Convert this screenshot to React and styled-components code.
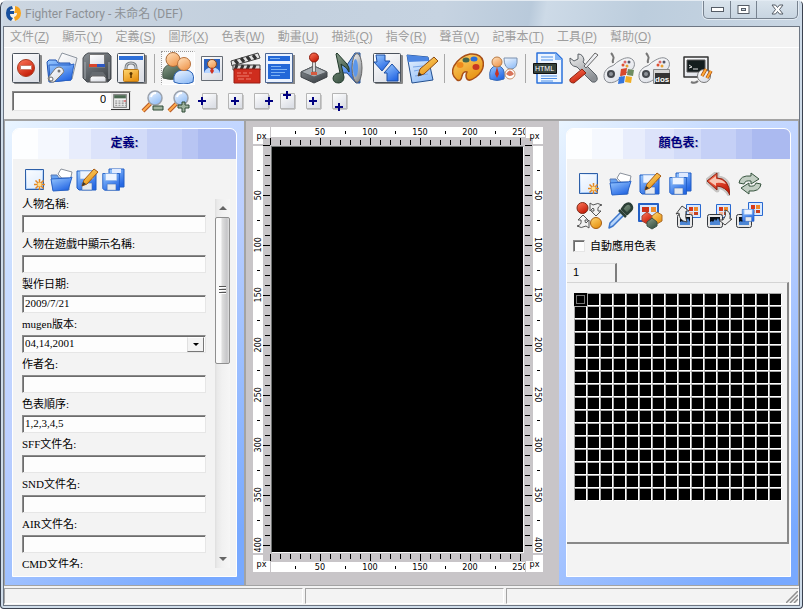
import React, { useState } from 'react';
import styled, { createGlobalStyle, css } from 'styled-components';

const SANS = '"Liberation Sans", "Noto Sans CJK TC", sans-serif';
const SERIF = '"Liberation Serif", "Noto Sans CJK TC", serif';
const FACE = '#f3f3f3';
const GREY = '#9e9e9e';

const Global = createGlobalStyle`
  * { box-sizing: border-box; }
  html, body { margin: 0; height: 100%; }
  body { background: #fff; font-family: ${SANS}; font-size: 12px; color: #000; overflow: hidden; }
  button { margin: 0; padding: 0; border: 0; background: none; font: inherit; color: inherit; }
  input, select { margin: 0; border-radius: 0; font: inherit; color: inherit; outline: none; }
  svg { flex: none; }
`;

/* ---------- window frame ---------- */

const Window = styled.div`
  display: flex;
  flex-direction: column;
  height: 100vh;
  padding: 0 2px 2px;
  border: 1px solid #3b4250;
  border-top-color: #e4ebf2;
  border-radius: 7px 5px 4px 4px;
  background: #cfdce9;
`;

const TitleBar = styled.header`
  display: flex;
  flex: none;
  height: 25px;
  padding: 0 0 0 2px;
  align-items: flex-start;
  background: linear-gradient(100deg, #ccd6e1 0%, #c3d0de 30%, #c6d3e1 55%, #b9cadb 66%, #cddae7 68%, #bccddd 80%, #c9d6e3 100%);
`;

const Title = styled.h1`
  display: flex;
  flex: 1;
  align-items: center;
  gap: 3px;
  height: 25px;
  margin: 0;
  font: 400 12px/24px Roboto, "Noto Sans CJK TC", sans-serif;
  color: #8d9196;
`;

const Caption = styled.div`
  display: flex;
  height: 18px;
  margin-right: 2px;
  border: 1px solid #77828f;
  border-top: 0;
  border-radius: 0 0 5px 5px;
  background: linear-gradient(#d9e3ec, #c8d5e1);
  box-shadow: 0 0 0 1px #e3ebf3;
`;

const CaptionButton = styled.button`
  display: flex;
  align-items: center;
  justify-content: center;
  width: ${(p) => (p.$wide ? 41 : 26)}px;
  & + & { border-left: 1px solid #77828f; }
`;

const Client = styled.div`
  display: flex;
  flex: 1;
  flex-direction: column;
  min-height: 0;
  border: 1px solid #6d7683;
  background: ${FACE};
`;

/* ---------- menu and toolbars ---------- */

const MenuBar = styled.nav`
  display: flex;
  flex: none;
  height: 21px;
  border-bottom: 1px solid #fff;
`;

const MenuItem = styled.button`
  padding: 0 7px 0 6px;
  line-height: 20px;
  white-space: nowrap;
  color: ${GREY};
`;

const ToolArea = styled.div`
  display: flex;
  flex: none;
  flex-direction: column;
  height: 73px;
  padding: 3px 6px 0;
  gap: 4px;
  border-bottom: 2px solid #a3a3a3;
`;

const ToolRow = styled.div`
  display: flex;
  align-items: center;
  height: ${(p) => (p.$small ? 24 : 34)}px;
`;

const ToolGroup = styled.div`
  display: flex;
  gap: ${(p) => p.$gap || 0}px;
  margin-left: ${(p) => p.$offset || 0}px;
`;

const Divider = styled.span`
  width: 1px;
  height: 29px;
  margin: 0 6px 0 5px;
  background: #a8a8a8;
`;

const ToolButton = styled.button`
  display: flex;
  align-items: center;
  justify-content: center;
  width: 34px;
  height: 34px;
  ${(p) => p.$pressed && css`
    background: #fafafa;
    border: 1px solid #fff;
    border-top: 1px dotted #9a9a9a;
    border-left: 1px dotted #9a9a9a;
  `}
`;

const SmallButton = styled.button`
  display: flex;
  align-items: center;
  justify-content: center;
  width: 26px;
  height: 24px;
`;

const sunken = css`
  border: 1px solid;
  border-color: #8a8a8a #e6e6e6 #e6e6e6 #8a8a8a;
  box-shadow: inset 1px 1px 0 #6c6c6c;
  background: #fdfdfd;
`;

const NumberBox = styled.div`
  ${sunken}
  display: flex;
  width: 119px;
  height: 20px;
  margin: 0 9px 0 2px;
  padding: 1px 0 0 1px;
`;

const NumberInput = styled.input`
  flex: 1;
  min-width: 0;
  padding: 0 5px 5px 0;
  border: 0;
  background: transparent;
  text-align: right;
  font-size: 11px;
`;

const CalcButton = styled.button`
  display: flex;
  align-items: center;
  justify-content: center;
  width: 19px;
  border-right: 1px solid #333;
  border-bottom: 1px solid #333;
  background: #ececec;
`;

/* ---------- body ---------- */

const Body = styled.main`
  display: flex;
  flex: 1;
  min-height: 0;
`;

const SidePanel = styled.aside`
  display: flex;
  flex: 0 0 242px;
  padding: 7px 7px 8px;
  border: solid #a3a3a3;
  border-width: 0 ${(p) => (p.$right ? 1 : 2)}px 0 ${(p) => (p.$right ? 0 : 1)}px;
  background: linear-gradient(135deg, #eaf5ff 0%, #c9ddff 22%, #bccfff 46%, #a0c1ff 65%, #78a9ff 92%);
  ${(p) => p.$right && css`flex-basis: 240px;`}
`;

const Card = styled.section`
  display: flex;
  flex: 1;
  flex-direction: column;
  min-width: 0;
  border: 1px solid #fff;
  border-radius: 7px 7px 0 0;
  background: ${FACE};
  overflow: hidden;
`;

const CardTitle = styled.h2`
  flex: none;
  height: 30px;
  margin: 0;
  font: 700 12px/28px ${SANS};
  text-align: center;
  color: #000080;
  text-shadow: 1px 1px 0 #bcc0cf;
  background: linear-gradient(90deg, #fdfeff 0 11%, #f5f8fe 11% 25%, #e8edfc 25% 35%, #dce3fa 35% 48%, #d2dbf8 48% 60%, #c5d0f6 60% 76%, #b8c5f3 76% 83%, #abbaf0 83%);
`;

const FileTools = styled.div`
  display: flex;
  flex: none;
  gap: 2px;
  padding: 9px 0 0 11px;
  height: 38px;
`;

const IconButton = styled.button`
  display: flex;
  align-items: center;
  justify-content: center;
  width: 24px;
  height: 24px;
`;

const FormArea = styled.div`
  display: flex;
  flex: 1;
  min-height: 0;
  margin: 0 6px 8px 9px;
`;

const FieldList = styled.div`
  display: flex;
  flex: 1;
  flex-direction: column;
  gap: 4px;
  min-width: 0;
  margin-right: 9px;
  overflow: hidden;
  font: 11px/15px ${SERIF};
`;

const Field = styled.div`
  display: flex;
  flex: none;
  flex-direction: column;
  gap: 3px;
`;

const TextInput = styled.input`
  ${sunken}
  width: 100%;
  height: 18px;
  padding: 0 2px 2px;
`;

const SelectBox = styled.div`
  display: grid;
  grid-template-columns: 1fr 17px;
  height: 18px;
  ${sunken}
  padding: 1px;
  & > * { grid-row: 1; }
`;

const Select = styled.select`
  grid-column: 1 / 3;
  min-width: 0;
  padding: 0 0 2px 1px;
  border: 0;
  appearance: none;
  background: transparent;
  line-height: 13px;
`;

const SelectArrow = styled.span`
  grid-column: 2;
  display: flex;
  align-items: center;
  justify-content: center;
  pointer-events: none;
  border: 1px solid;
  border-color: #fff #777 #777 #e0e0e0;
  background: ${FACE};
`;

const Triangle = styled.span`
  border: solid transparent;
  border-width: 0 ${(p) => p.$size}px;
  ${(p) => (p.$up
    ? css`border-bottom: ${p.$size}px solid ${p.$color};`
    : css`border-top: ${p.$size}px solid ${p.$color};`)}
`;

const ScrollBar = styled.div`
  display: flex;
  flex: none;
  flex-direction: column;
  width: 15px;
  margin-top: 2px;
  background: linear-gradient(90deg, #dedede 0, #e9e9e9 2px, #f1f1f1 7px, #f6f6f6 100%);
`;

const ScrollArrow = styled.button`
  display: flex;
  flex: none;
  align-items: center;
  justify-content: center;
  height: 18px;
`;

const ScrollTrack = styled.div`
  flex: 1;
`;

const ScrollThumb = styled.div`
  display: flex;
  flex-direction: column;
  align-items: center;
  justify-content: center;
  gap: 1px;
  height: 44%;
  border: 1px solid #8f8f8f;
  border-radius: 2px;
  background: linear-gradient(90deg, #fafafa 0 35%, #dcdcdc 50%, #c6c6c8 85%, #e2e2e2);
`;

const Grip = styled.i`
  width: 7px;
  height: 2px;
  border-top: 1px solid #555;
  border-bottom: 1px solid #fff;
`;

/* ---------- ruled workspace ---------- */

const Workspace = styled.section`
  display: grid;
  flex: 1;
  min-width: 0;
  grid-template-columns: 17px minmax(0, 1fr) 18px;
  grid-template-rows: 18px minmax(0, 1fr) 18px;
  padding: 6px 16px 13px 7px;
  background: #c8c5c8;
  font: 9px/10px "DejaVu Sans Condensed", "DejaVu Sans", sans-serif;
`;

const Unit = styled.div`
  display: flex;
  width: 17px;
  height: 17px;
  justify-self: ${(p) => (p.$right ? 'end' : 'start')};
  align-self: ${(p) => (p.$bottom ? 'end' : 'start')};
  align-items: center;
  justify-content: center;
  background: linear-gradient(#c8c5c8, #c8c5c8)
    ${(p) => (p.$right ? 'left' : 'right')} ${(p) => (p.$bottom ? 'top' : 'bottom')} / 7px 6px no-repeat #fff;
`;

const across = css`
  flex-direction: ${(p) => (p.$side === 'top' ? 'column' : 'column-reverse')};
  background:
    repeating-linear-gradient(90deg, #000 0 1px, transparent 1px 10px) 0 ${(p) => (p.$side === 'top' ? '100%' : '0')} / 100% 5px no-repeat,
    repeating-linear-gradient(90deg, #000 0 1px, transparent 1px 50px) 0 ${(p) => (p.$side === 'top' ? '100%' : '0')} / 100% 7px no-repeat;
`;

const down = css`
  flex-direction: ${(p) => (p.$side === 'left' ? 'row' : 'row-reverse')};
  background:
    repeating-linear-gradient(#000 0 1px, transparent 1px 10px) ${(p) => (p.$side === 'left' ? '100%' : '0')} 0 / 5px 100% no-repeat,
    repeating-linear-gradient(#000 0 1px, transparent 1px 50px) ${(p) => (p.$side === 'left' ? '100%' : '0')} 0 / 7px 100% no-repeat;
`;

const RulerBox = styled.div`
  display: flex;
  min-width: 0;
  min-height: 0;
  ${(p) => (p.$side === 'top' || p.$side === 'bottom' ? across : down)}
`;

const Scale = styled.div`
  display: flex;
  overflow: hidden;
  background: #fff;
  ${(p) => (p.$vertical
    ? css`flex-direction: column; width: 10px; margin: 1px 0; padding-top: 24px;`
    : css`height: 10px; margin: 0 0 0 1px; padding-left: 24px;`)}
`;

const Step = styled.div`
  display: flex;
  flex: 0 0 50px;
  align-items: center;
  justify-content: center;
  ${(p) => (p.$vertical
    ? css`background: linear-gradient(#000, #000) 50% 0 / 3px 1px no-repeat;`
    : css`background: linear-gradient(#000, #000) 0 60% / 1px 3px no-repeat;`)}
`;

const StepText = styled.span`
  ${(p) => p.$vertical && css`writing-mode: vertical-rl;`}
  ${(p) => p.$flip && css`transform: rotate(180deg);`}
`;

const Canvas = styled.div`
  margin: 1px;
  border: 1px solid;
  border-color: #6f7372 #f4f4f4 #f4f4f4 #6f7372;
  background: #000;
`;

/* ---------- palette panel ---------- */

const PaletteTools = styled.div`
  display: grid;
  flex: none;
  grid-template-columns: ${(p) => p.$columns};
  align-items: center;
  justify-items: center;
  height: 32px;
  padding-left: 8px;
`;

const ToolBlock = styled.div`
  flex: none;
  padding-top: 9px;
`;

const CheckLine = styled.label`
  display: flex;
  flex: none;
  align-items: center;
  gap: 5px;
  height: 22px;
  margin: 3px 0 6px 6px;
  font: 11px/20px ${SANS};
`;

const Check = styled.input`
  appearance: none;
  width: 12px;
  height: 12px;
  ${sunken}
  &:checked { background: #000080; }
`;

const Tab = styled.button`
  flex: none;
  width: 50px;
  height: 19px;
  padding: 0 0 3px 6px;
  border: solid;
  border-width: 1px 2px 0 0;
  border-color: #dcdcdc #7d7d7d;
  text-align: left;
  font-size: 11px;
`;

const TabPage = styled.div`
  flex: none;
  margin-right: 1px;
  padding: 10px 0 41px 7px;
  border: 2px solid #888;
  border-width: 1px 2px 2px 0;
  border-top-color: #d4d4d4;
`;

const Swatches = styled.div`
  display: grid;
  grid-template-columns: repeat(16, 13px);
`;

const Swatch = styled.button`
  display: flex;
  align-items: center;
  justify-content: center;
  width: 13px;
  height: 13px;
  border: 1px solid;
  border-color: #a9a9a9 #fff #fff #a9a9a9;
  background: #000;
  ${(p) => p.$active && css`
    border-color: #000;
    &::after { content: ''; width: 7px; height: 7px; border: 1px solid #777; }
  `}
`;

/* ---------- status bar ---------- */

const StatusBar = styled.footer`
  display: grid;
  flex: none;
  grid-template-columns: minmax(0, 299fr) minmax(0, 198fr) minmax(0, 293fr);
  gap: 2px;
  height: 20px;
  padding: 2px 0 1px;
  border-top: 1px solid #a3a3a3;
`;

const StatusCell = styled.div`
  display: flex;
  align-items: flex-end;
  justify-content: flex-end;
  border: 1px solid;
  border-color: #a3a3a3 #fff #fff #a3a3a3;
`;

/* ---------- drawings ---------- */

const Hidden = styled.svg`
  position: absolute;
  width: 0;
  height: 0;
`;

const grads = [
  ['gBlue', '#9ccbff', '#2668e4'], ['gSky', '#f0f7ff', '#94bff7'], ['gPaper', '#ffffff', '#dcdfe6'],
  ['gGold', '#ffd873', '#e79212'], ['gRed', '#ff7a5c', '#c41c08'], ['gGrey', '#f4f4f4', '#8b8f94'],
  ['gSkin', '#ffe3c0', '#f09a52'], ['gGreen', '#8ba08c', '#3b5344'], ['gSteel', '#8a9095', '#42474c'],
];

const Defs = () => (
  <Hidden aria-hidden="true">
    <defs>
      {grads.map(([id, a, b]) => (
        <linearGradient key={id} id={id} x1="0" y1="0" x2="0.6" y2="1">
          <stop offset="0" stopColor={a} /><stop offset="1" stopColor={b} />
        </linearGradient>
      ))}
    </defs>
  </Hidden>
);

const Svg = ({ size = 32, box = 32, children }) => (
  <svg width={size} height={size} viewBox={`0 0 ${box} ${box}`} strokeLinejoin="round" aria-hidden="true">{children}</svg>
);

const Sheet = () => (
  <>
    <rect x="3" y="3" width="28" height="29" rx="1" fill="#888" />
    <rect x="1.5" y="1.5" width="27" height="29" rx="1" fill="url(#gPaper)" stroke="#4a525c" />
  </>
);

const Pad = () => (
  <>
    <path d="M10 11c-1-5 2-4 0-7q-1-2-2-3" fill="none" stroke="#777" strokeWidth="2" />
    <path d="M2 28c-3-6 1-12 7-14 3-1 3-3 7-5 5-3 10-5 14-1 3 4 1 9-3 11-4 2-6 2-8 4-2 6-13 11-17 5z" fill="url(#gPaper)" stroke="#888c92" />
    <circle cx="8" cy="22" r="4" fill="#44484e" /><circle cx="8" cy="22" r="2" fill="#8d9299" />
    <circle cx="22" cy="10" r="1.5" fill="#d66" /><circle cx="26" cy="10" r="1.5" fill="#556" />
    <circle cx="24" cy="14" r="1.5" fill="#e8a030" /><circle cx="20" cy="13" r="1.5" fill="#e05030" />
  </>
);

const Monitor = ({ x, y }) => (
  <g transform={`translate(${x} ${y})`}>
    <rect x=".5" y=".5" width="15" height="13" rx="2" fill="#e6e6e6" stroke="#33373c" />
    <path d="M3 3h10v8H3z" fill="#0a0f16" /><path d="M3 11V8l2-1 1 1 2-3 1 2 2-3 2 4v3z" fill="#4d86d4" />
  </g>
);

const Tiles = ({ x, y }) => (
  <g transform={`translate(${x} ${y})`}>
    <rect x=".5" y=".5" width="14" height="13" fill="#d8e9ff" stroke="#2868d0" />
    <path d="M3 3h4v4H3z" fill="#d83818" /><path d="M8 3h4v4H8z" fill="#f08828" />
    <path d="M3 8h4v3H3z" fill="#f2b090" /><path d="M8 8h4v3H8z" fill="#c84020" />
  </g>
);

const icons = {
  stop: <><Sheet /><circle cx="15" cy="16" r="8.500" fill="url(#gRed)" stroke="#a93a20" /><rect x="9.500" y="13.500" width="11" height="4" fill="#fff" stroke="#c97a66" /></>,
  folderPen: (
    <>
      <path d="M12 9l4-8 15 5-5 21z" fill="url(#gPaper)" stroke="#8c949f" />
      <path d="M1 10l2-2h7l2 3h12l1 17-22 2z" fill="url(#gBlue)" stroke="#1c4fae" />
      <path d="M3 13h21l4-1-3 16-21 2z" fill="url(#gBlue)" stroke="#2a62c4" />
      <path d="M2 26l7-9q4-4 8 0 2 3-1 5l-8 8q-5 1-6-4z" fill="url(#gPaper)" stroke="#777" /><circle cx="5" cy="27" r="2" fill="#fff" stroke="#666" />
      <circle cx="13" cy="19" r="1.500" fill="#777" />
    </>
  ),
  drive: (
    <>
      <path d="M4 3l3-2h20l3 3v23l-3 3H6l-4-4V6z" fill="url(#gSteel)" stroke="#4a4f54" />
      <rect x="8.500" y="2.500" width="15" height="13" fill="url(#gPaper)" stroke="#777" /><path d="M8 12h8v3H8z" fill="#d8452c" /><path d="M16 12h8v3h-8z" fill="#2d57c0" />
      <path d="M9 24l2-4h11l3 4v6H9z" fill="#666b70" /><path d="M9 26l2-2h12l2 2v4H9z" fill="url(#gPaper)" stroke="#666" />
      <path d="M4 10v17M28 10v17" stroke="#a6abb0" />
    </>
  ),
  lock: (
    <>
      <Sheet /><path d="M3 4h24v4H3z" fill="#2e6fd8" />
      <path d="M10 19v-3q0-5 5-5t5 5v3" fill="none" stroke="#7a8086" strokeWidth="3" /><path d="M10 19v-3q0-5 5-5t5 5v3" fill="none" stroke="#d5d8dc" />
      <rect x="7.500" y="17.500" width="15" height="12" rx="1" fill="url(#gGold)" stroke="#b8791a" /><path d="M15 21v5" stroke="#5a3500" strokeWidth="1.500" /><circle cx="15" cy="21.500" r="1.500" fill="#5a3500" />
    </>
  ),
  users: (
    <>
      <path d="M1 26q-2-13 9-14 6 0 8 6v8q-9 3-17 0z" fill="url(#gGreen)" stroke="#4c5c50" />
      <circle cx="11" cy="7.500" r="7" fill="url(#gSkin)" stroke="#a86a3a" />
      <path d="M12 30q-2-12 10-12t9 12q-9 4-19 0z" fill="url(#gSky)" stroke="#2c63b6" /><circle cx="22" cy="12" r="6.500" fill="url(#gSkin)" stroke="#b8713c" />
    </>
  ),
  portrait: (
    <>
      <rect x="5.500" y="4.500" width="21" height="24" fill="url(#gPaper)" stroke="#666c75" /><path d="M8 7h16v14H8z" fill="#2b62bf" /><path d="M8 21q1-5 8-6 7 1 8 6z" fill="#b9d6ff" />
      <circle cx="16" cy="12" r="4.500" fill="url(#gSkin)" stroke="#874b24" /><path d="M16 15l2 4-2 3-2-3z" fill="#cf3222" />
    </>
  ),
  clapper: (
    <>
      <path d="M1 9L28 1l2 5L2 14z" fill="#e4e4e4" stroke="#444" /><path d="M5 8l3 4M11 6l3 4M17 4.500l3 4M23 3l3 4" stroke="#333" strokeWidth="3" />
      <path d="M3 13h27v5H3z" fill="#ddd" stroke="#444" /><path d="M7 13l-2 5M13 13l-2 5M19 13l-2 5M25 13l-2 5" stroke="#333" strokeWidth="3" />
      <path d="M4 17h26v14H4z" fill="#cf2d1e" stroke="#9a1d12" /><path d="M7 21h4m2 0h4m2 0h3M7 24h12M8 27h6m2 0h5" stroke="#ee8070" />
    </>
  ),
  text: (
    <>
      <rect x="3" y="3" width="28" height="29" fill="#888" /><rect x="1.500" y="1.500" width="27" height="29" fill="#eaf2ff" stroke="#4b6592" />
      <path d="M4 4h22v5H4zM4 12h22v15H4z" fill="#2368d8" /><path d="M6 6.500h10M7 14.500h10M7 17.500h16M7 20.500h14M7 23.500h9" stroke="#7db2f4" />
    </>
  ),
  joystick: (
    <>
      <path d="M3 20l13-6 13 6v5l-13 6-13-6z" fill="url(#gSteel)" stroke="#3c4044" /><path d="M3 20l13 5 13-5-13-6z" fill="#a5abb0" stroke="#5a5f64" />
      <path d="M14.500 8h3v12h-3z" fill="#ddd" stroke="#555" strokeWidth=".8" /><circle cx="16" cy="5.500" r="4.500" fill="url(#gRed)" stroke="#8d1a0c" /><path d="M13 20h6v3h-6z" fill="#d55a40" />
    </>
  ),
  sound: (
    <>
      <path d="M9 13h6l8-12h5v30h-4l-9-10H9z" fill="url(#gBlue)" stroke="#28508c" /><ellipse cx="25" cy="16" rx="5" ry="14.500" fill="url(#gGrey)" stroke="#666" /><ellipse cx="23.500" cy="16" rx="2.500" ry="9" fill="#5c97ea" />
      <path d="M5 1l10 11q3 4 2 8-1-4-8-8l3 13q0 5-5 6-6 0-6-5 1-5 7-5L4 2z" fill="url(#gGreen)" stroke="#20382a" />
    </>
  ),
  arrows: (
    <>
      <Sheet /><path d="M4 3h9v6h5l-8 10-8-9h3z" fill="url(#gBlue)" stroke="#1d4fa4" /><path d="M20 12l8 9h-2v8H15v-8h-3z" fill="url(#gBlue)" stroke="#1d4fa4" />
    </>
  ),
  note: (
    <>
      <path d="M1 3l21 2 5 23-21 3z" fill="url(#gSky)" stroke="#24508f" /><path d="M1 3l21 2 1 4-21 1z" fill="#4c86e2" /><path d="M7 15l10-1M8 19l5-1M9 24l13-2" stroke="#79a6e8" />
      <path d="M12 24l2-7L28 5l4 4-14 13z" fill="url(#gGold)" stroke="#8a4a14" /><path d="M12 24l1-4 3 3z" fill="#333" />
    </>
  ),
  palette: (
    <>
      <path d="M5 28Q-2 22 2 14 8 4 18 2q11-1 13 7 2 9-7 16-7 5-9 2t0-7q-4-1-5 4-1 6-5 4z" fill="url(#gGold)" stroke="#a84f18" strokeWidth="1.500" />
      <ellipse cx="8" cy="13" rx="3.500" ry="3" fill="#f08a1c" /><ellipse cx="14" cy="8" rx="3.500" ry="2.500" fill="#44664c" /><ellipse cx="22" cy="7" rx="3.500" ry="2.500" fill="#2c6fd8" /><ellipse cx="24" cy="15" rx="3.500" ry="3" fill="#c93822" />
    </>
  ),
  pair: (
    <>
      <path d="M3 27q-2-13 7-13t7 13q-7 3-14 0z" fill="url(#gBlue)" stroke="#3b6cb6" /><circle cx="10" cy="10" r="5" fill="url(#gSkin)" stroke="#b87a44" /><path d="M10 15l2 7-2 4-2-4z" fill="#c73122" />
      <path d="M17 6h13q1 11-6 11t-7-11z" fill="url(#gSky)" stroke="#7a90ae" /><circle cx="23" cy="22" r="5" fill="#fff" stroke="#c8926c" /><path d="M19 22q4-7 8 0-4 4-8 0z" fill="#d8745a" />
    </>
  ),
  html: (
    <>
      <path d="M4 1h19l6 6v24H4z" fill="#edf5ff" stroke="#2b72dc" strokeWidth="1.500" /><path d="M22 1v7h7z" fill="#83b5f5" /><path d="M8 5h12M8 8h12M8 24h16M8 26.500h16M8 29h12" stroke="#4f91e8" />
      <rect x=".5" y="11.500" width="23" height="10" fill="#36433d" stroke="#111" /><text x="2" y="19" fill="#fff" fontFamily="Liberation Sans" fontSize="7">HTML</text>
    </>
  ),
  tools: (
    <>
      <path d="M2 6l4 3 4-2V2q5 0 6 6l-1 2 13 13q3 5-1 7-3 1-5-2L9 15Q1 14 2 6z" fill="url(#gGrey)" stroke="#5b6167" />
      <path d="M30 3L18 16l-2-2L27 1z" fill="url(#gPaper)" stroke="#666" /><path d="M14 17l4 4L6 31q-5 0-4-4z" fill="url(#gRed)" stroke="#8d2412" />
    </>
  ),
  padWin: (
    <><Pad /><path d="M18 17l6-1-1 7-6 1z" fill="#d9492c" /><path d="M25 17l6 1-1 6-6-1z" fill="#6f8d62" /><path d="M16 25l6-1-1 7-6 1z" fill="#3476df" /><path d="M23 24l6 1-1 6-6-1z" fill="#f0ae24" /></>
  ),
  padDos: (
    <><Pad /><rect x="15.500" y="17.500" width="16" height="14" fill="#d5d5d5" stroke="#888" /><path d="M17 21h15v11H17z" fill="#333" /><text x="17" y="30" fill="#fff" fontFamily="Liberation Sans" fontSize="8" fontWeight="700">dos</text></>
  ),
  terminal: (
    <>
      <path d="M3 5h24v20H3z" fill="url(#gPaper)" stroke="#333" strokeWidth="1.500" /><path d="M6 8h18v12H6z" fill="#141d1e" stroke="#555" /><path d="M8 13l3 2-3 1M12 17h5" fill="none" stroke="#ddd" />
      <circle cx="23" cy="24" r="6.500" fill="url(#gPaper)" stroke="#777" /><path d="M21 24l4-7M26 26l4-7" stroke="#a34b10" strokeWidth="3.500" /><path d="M21 24l4-7M26 26l4-7" stroke="#ffa938" strokeWidth="2" /><path d="M17 29q-3 3-7 1" fill="none" stroke="#777" strokeWidth="2" />
    </>
  ),
};

const Magnifier = ({ plus }) => (
  <Svg size={24} box={24}>
    <path d="M2 22l8-8" stroke="#b85a26" strokeWidth="4" /><path d="M2 22l8-8" stroke="#ffab4c" strokeWidth="2" />
    <circle cx="14" cy="9" r="7" fill="url(#gSky)" stroke="#9aa1ac" strokeWidth="1.500" /><path d="M10 8q1-4 5-4" stroke="#fff" strokeWidth="2" fill="none" />
    <path d={plus ? 'M15 13h3v3h4v3h-4v4h-3v-4h-4v-3h4z' : 'M12 17h10v4H12z'} fill="#9fb29e" stroke="#2e4a36" />
  </Svg>
);

const Marker = ({ x, y }) => (
  <Svg size={24} box={24}>
    <path d="M6 20h14V6" fill="none" stroke="#a0a0a0" /><rect x="5.500" y="4.500" width="14" height="15" fill="url(#gPaper)" stroke="#b5b5b5" />
    <path d={`M${x - 4} ${y - 1}h8v2h-8zM${x - 1} ${y - 4}h2v8h-2z`} fill="#000080" />
  </Svg>
);

const FloppyBody = () => (
  <>
    <path d="M2 4h19v19H4l-2-2z" fill="url(#gBlue)" stroke="#1f5cc4" /><path d="M5 4h13v8H5z" fill="#edf4ff" stroke="#7ea9e4" strokeWidth=".6" /><path d="M7 16h10v7H7z" fill="#e6e9ee" stroke="#3f6db4" strokeWidth=".6" />
  </>
);

const small = {
  create: <><rect x="1.500" y="1.500" width="18" height="20" fill="url(#gSky)" stroke="#2d5fa8" /><path d="M3 3h15v17H3z" fill="#fff" opacity=".7" /><path d="M15.500 11v11M10 16.500h11M11.500 12.500l8 8M19.500 12.500l-8 8" stroke="#e58820" strokeWidth="1.500" /><circle cx="15.500" cy="16.500" r="2" fill="#ffe08a" /></>,
  open: <><path d="M8 6l3-5 11 3-3 14z" fill="#fff" stroke="#8b929c" /><path d="M1 7h6l2 3h10v12L3 22z" fill="#67a2f1" stroke="#5a7ab4" /><path d="M1 11l18-1 3-1-4 13-15 1z" fill="url(#gBlue)" stroke="#2a64c7" /></>,
  edit: <><g transform="translate(-1 -1)"><FloppyBody /></g><path d="M6 18l2-6L18 1l4 3-11 12z" fill="url(#gGold)" stroke="#a65a10" /><path d="M6 18l1-4 3 2z" fill="#333" /></>,
  saveAll: <><path d="M7 1h15v18H7z" fill="url(#gBlue)" stroke="#235fc4" /><path d="M10 1h9v4h-9z" fill="#dfeaff" /><g transform="translate(-1 2) scale(.88)"><FloppyBody /></g></>,
  undo: <><path d="M1 9l10-8v5q12 0 13 17-4-8-13-9v4z" fill="none" stroke="#c6c4c2" strokeWidth="5" /><path d="M1 9l10-8v5q12 0 13 17-4-8-13-9v4z" fill="url(#gRed)" stroke="#8f2413" /><path d="M3 9l7-5v3q7 0 10 5-6-2-10-1v3z" fill="#f8c6b4" /></>,
  refresh: <><path d="M1 11q1-8 12-7V1l8 6-8 5V9q-6-1-7 3z" fill="#c3cfc4" stroke="#35533d" /><path d="M23 12q-1 8-12 7v3l-8-6 8-5v3q6 1 7-3z" fill="#c3cfc4" stroke="#35533d" /></>,
  swap: <><circle cx="6.500" cy="6" r="5.500" fill="url(#gRed)" stroke="#7e2a17" /><circle cx="20" cy="21" r="5.500" fill="url(#gGold)" stroke="#a55d13" /><path d="M14 9V1l3 2q5-3 9 0-5 1-4 6h3l-5 5-5-5h3q0-3-1-3z" fill="#f2f2f2" stroke="#555" /><path d="M13 18v8l-3-2q-5 3-9 0 5-1 4-6H2l5-5 5 5H9q0 3 1 3z" fill="#f2f2f2" stroke="#555" /></>,
  dropper: <><path d="M14 10l3 3L6 24l-4 2 1-5z" fill="url(#gSky)" stroke="#3c76cc" strokeWidth="1.500" /><path d="M12 8l7 7M15 7l3-4q4-3 6 0t0 5l-4 4z" fill="url(#gGreen)" stroke="#2c3f36" strokeWidth="2.500" /></>,
  cubes: <><rect x="2" y="2" width="19" height="17" fill="#d8e9ff" stroke="#2460c5" strokeWidth="2" /><path d="M5 5h7v5H5z" fill="#cd321a" /><path d="M14 5h5v5h-5z" fill="#ee8c2d" /><path d="M5 14l5-4 5 4v5l-5 3-5-3z" fill="url(#gRed)" stroke="#a24636" /><path d="M15 14l5-4 5 3v6l-5 3-5-3z" fill="url(#gGold)" stroke="#ab6d28" /><path d="M10 20l5-4 5 4v4l-5 3-5-3z" fill="url(#gGreen)" stroke="#3c5246" /></>,
  fromImage: <><Tiles x={11} y={2} /><Monitor x={2} y={12} /><path d="M1 12l6-8 7 5h-3q-1 7 1 11-8-1-8-9z" fill="#eee" stroke="#444" /></>,
  toImage: <><Tiles x={10} y={2} /><Monitor x={1} y={12} /><path d="M19 8q6 1 5 9h2l-7 6-6-5h4q4-4 2-10z" fill="#eee" stroke="#444" /></>,
  saveImage: <><Tiles x={12} y={0} /><Monitor x={0} y={12} /><g transform="translate(5 5) scale(.62)"><FloppyBody /></g></>,
};

const Small = ({ name, size = 24 }) => (
  <Svg size={size} box={size}>{small[name]}</Svg>
);

/* ---------- data ---------- */

const menus = [
  ['文件', 'Z'], ['顯示', 'Y'], ['定義', 'S'], ['圖形', 'X'], ['色表', 'W'], ['動畫', 'U'],
  ['描述', 'Q'], ['指令', 'R'], ['聲音', 'V'], ['記事本', 'T'], ['工具', 'P'], ['幫助', 'O'],
];

const markers = [
  ['左移', 5, 12], ['置中', 12, 12], ['右移', 20, 12], ['上移', 12, 6], ['中心', 12, 12], ['下移', 12, 18],
];

const fields = [
  ['人物名稱:', ''], ['人物在遊戲中顯示名稱:', ''], ['製作日期:', '2009/7/21'], ['mugen版本:', '04,14,2001', true],
  ['作者名:', ''], ['色表順序:', '1,2,3,4,5'], ['SFF文件名:', ''], ['SND文件名:', ''], ['AIR文件名:', ''], ['CMD文件名:', ''],
];

const fileTools = [['create', '新建'], ['open', '打開'], ['edit', '保存'], ['saveAll', '另存']];
const imageTools = [
  ['swap', '交換顏色'], ['dropper', '取色'], ['cubes', '顏色組'],
  ['fromImage', '從圖形讀取'], ['toImage', '套用到圖形'], ['saveImage', '保存到圖形'],
];

/* ---------- parts ---------- */

const Tools = ({ names, pressed }) => names.map((n) => (
  <ToolButton key={n} type="button" aria-label={n} $pressed={n === pressed}><Svg>{icons[n]}</Svg></ToolButton>
));

const Ruler = ({ side }) => {
  const vertical = side === 'left' || side === 'right';
  const count = vertical ? 8 : 5;
  return (
    <RulerBox $side={side}>
      <Scale $vertical={vertical}>
        {Array.from({ length: count }, (_, i) => (
          <Step key={i} $vertical={vertical}>
            <StepText $vertical={vertical} $flip={side === 'left'}>{(i + 1) * 50}</StepText>
          </Step>
        ))}
      </Scale>
    </RulerBox>
  );
};

const FieldRow = ({ label, value, choice, id }) => (
  <Field>
    <label htmlFor={id}>{label}</label>
    {choice ? (
      <SelectBox>
        <Select id={id} defaultValue={value}><option>{value}</option></Select>
        <SelectArrow><Triangle $size={3} $color="#000" /></SelectArrow>
      </SelectBox>
    ) : <TextInput id={id} defaultValue={value} />}
  </Field>
);

export default function App() {
  const [active, setActive] = useState(0);
  return (
    <Window>
      <Global />
      <Defs />
      <TitleBar>
        <Title>
          <Svg size={17} box={17}>
            <circle cx="8.500" cy="8.500" r="7.500" fill="#f5f1e8" />
            <path d="M7 1Q1 2 1 8t5 8l2-3q-3-1-3-4h4V6H5q0-2 3-2z" fill="#164f9e" />
            <path d="M10 1q6 1 6 7t-6 8l-1-4q3-1 3-4H9l1-3z" fill="#f5a31e" />
          </Svg>
          Fighter Factory - 未命名 (DEF)
        </Title>
        <Caption>
          <CaptionButton type="button" aria-label="最小化">
            <svg width="13" height="6" aria-hidden="true"><rect x=".5" y=".5" width="12" height="4" fill="#fff" stroke="#555c66" /></svg>
          </CaptionButton>
          <CaptionButton type="button" aria-label="最大化">
            <svg width="13" height="10" aria-hidden="true"><rect x="1" y=".5" width="11" height="8" fill="#fff" stroke="#555c66" /><rect x="4.500" y="3.500" width="4" height="2" fill="#c8d5e1" stroke="#555c66" /></svg>
          </CaptionButton>
          <CaptionButton type="button" aria-label="關閉" $wide>
            <svg width="13" height="11" aria-hidden="true"><path d="M1 1h3.500l2 2.500 2-2.500H12L8.500 5.500 12 10H8.500l-2-2.500-2 2.500H1l3.500-4.500z" fill="#fff" stroke="#555c66" /></svg>
          </CaptionButton>
        </Caption>
      </TitleBar>

      <Client>
        <MenuBar>
          {menus.map(([name, key]) => (
            <MenuItem key={key} type="button">{name}(<u>{key}</u>)</MenuItem>
          ))}
        </MenuBar>

        <ToolArea>
          <ToolRow>
            <ToolGroup $gap={1}><Tools names={['stop', 'folderPen', 'drive', 'lock']} /></ToolGroup>
            <Divider />
            <ToolGroup><Tools names={['users', 'portrait', 'clapper', 'text', 'joystick', 'sound']} pressed="users" /></ToolGroup>
            <ToolGroup $offset={6}><Tools names={['arrows', 'note']} /></ToolGroup>
            <Divider />
            <ToolGroup $gap={1}><Tools names={['palette', 'pair']} /></ToolGroup>
            <Divider />
            <ToolGroup $gap={1}><Tools names={['html', 'tools', 'padWin', 'padDos']} /></ToolGroup>
            <ToolGroup $offset={9}><Tools names={['terminal']} /></ToolGroup>
          </ToolRow>
          <ToolRow $small>
            <NumberBox>
              <NumberInput aria-label="編號" defaultValue="0" />
              <CalcButton type="button" aria-label="計算機">
                <Svg size={16} box={15}>
                  <rect x="1.500" y="1.500" width="12" height="12" fill="#f2f2f2" stroke="#888" /><path d="M2 2h11v3H2z" fill="#4c6a52" />
                  <path d="M3 7.500h10M3 9.500h10M3 11.500h10" stroke="#888" strokeDasharray="2 1" /><path d="M11 7h2v1h-2z" fill="#d33" />
                </Svg>
              </CalcButton>
            </NumberBox>
            <SmallButton type="button" aria-label="縮小"><Magnifier /></SmallButton>
            <SmallButton type="button" aria-label="放大"><Magnifier plus /></SmallButton>
            <ToolGroup $offset={4}>
              {markers.map(([name, x, y]) => (
                <SmallButton key={name} type="button" aria-label={name}><Marker x={x} y={y} /></SmallButton>
              ))}
            </ToolGroup>
          </ToolRow>
        </ToolArea>

        <Body>
          <SidePanel>
            <Card>
              <CardTitle>定義:</CardTitle>
              <FileTools>
                {fileTools.map(([n, l]) => <IconButton key={n} type="button" aria-label={l}><Small name={n} /></IconButton>)}
              </FileTools>
              <FormArea>
                <FieldList>
                  {fields.map(([label, value, choice], i) => (
                    <FieldRow key={label} id={`field-${i}`} label={label} value={value} choice={choice} />
                  ))}
                </FieldList>
                <ScrollBar>
                  <ScrollArrow type="button" aria-label="向上"><Triangle $up $size={4} $color="#666" /></ScrollArrow>
                  <ScrollTrack><ScrollThumb><Grip /><Grip /><Grip /></ScrollThumb></ScrollTrack>
                  <ScrollArrow type="button" aria-label="向下"><Triangle $size={4} $color="#666" /></ScrollArrow>
                </ScrollBar>
              </FormArea>
            </Card>
          </SidePanel>

          <Workspace>
            <Unit>px</Unit><Ruler side="top" /><Unit $right>px</Unit>
            <Ruler side="left" /><Canvas /><Ruler side="right" />
            <Unit $bottom>px</Unit><Ruler side="bottom" /><Unit $bottom $right>px</Unit>
          </Workspace>

          <SidePanel $right>
            <Card>
              <CardTitle>顏色表:</CardTitle>
              <ToolBlock>
                <PaletteTools $columns="30px 31px 30px 30px 44px 20px">
                  {fileTools.map(([n, l]) => <IconButton key={n} type="button" aria-label={l}><Small name={n} /></IconButton>)}
                  <IconButton type="button" aria-label="復原"><Small name="undo" /></IconButton>
                  <IconButton type="button" aria-label="重新整理"><Small name="refresh" /></IconButton>
                </PaletteTools>
                <PaletteTools $columns="30px 31px 30px 46px 16px 44px">
                  {imageTools.map(([n, l]) => <IconButton key={n} type="button" aria-label={l}><Small name={n} size={28} /></IconButton>)}
                </PaletteTools>
              </ToolBlock>
              <CheckLine><Check type="checkbox" />自動應用色表</CheckLine>
              <Tab type="button">1</Tab>
              <TabPage>
                <Swatches>
                  {Array.from({ length: 256 }, (_, i) => (
                    <Swatch key={i} type="button" aria-label={`顏色 ${i}`} $active={i === active} onClick={() => setActive(i)} />
                  ))}
                </Swatches>
              </TabPage>
            </Card>
          </SidePanel>
        </Body>

        <StatusBar>
          <StatusCell /><StatusCell />
          <StatusCell>
            <svg width="12" height="12" aria-hidden="true"><path d="M0 12L12 0M4 12l8-8M8 12l4-4" stroke="#8f8f8f" strokeWidth="1.500" /></svg>
          </StatusCell>
        </StatusBar>
      </Client>
    </Window>
  );
}
